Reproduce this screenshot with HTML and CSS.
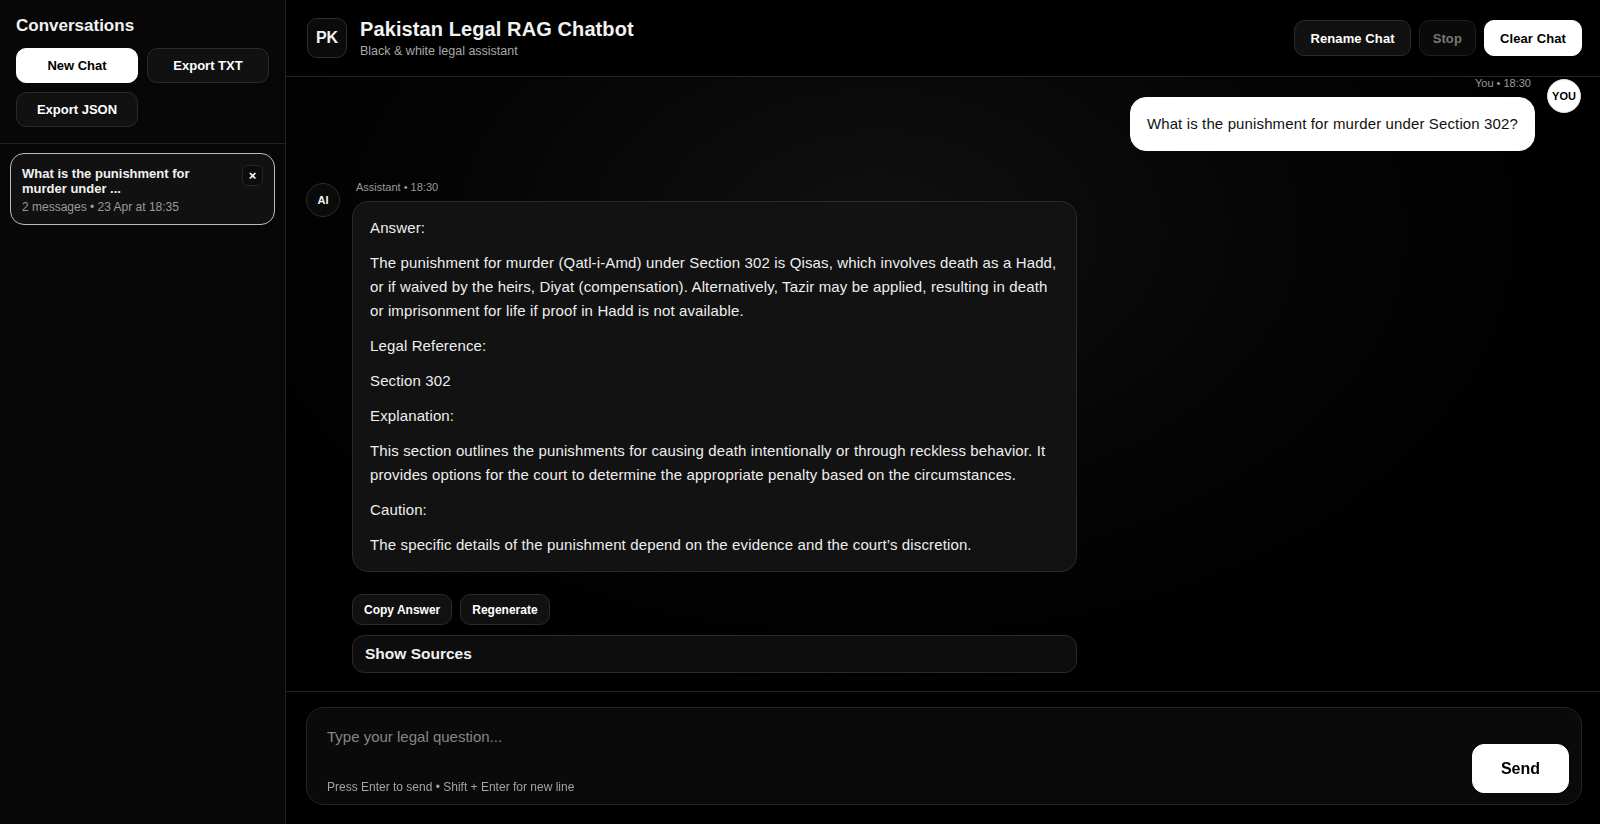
FILE: index.html
```html
<!DOCTYPE html>
<html lang="en">

<head>
    <meta charset="UTF-8">
    <meta name="viewport" content="width=device-width, initial-scale=1.0">
    <title>Pakistan Legal RAG Chatbot</title>
    <link rel="stylesheet" href="styles.css">
</head>

<body>
    <aside class="sidebar">
        <div class="sidebar-top">
            <h2>Conversations</h2>
            <div class="sidebar-actions">
                <button class="btn btn-light">New Chat</button>
                <button class="btn">Export TXT</button>
                <button class="btn">Export JSON</button>
            </div>
        </div>

        <div class="conv-list">
            <div class="conv-item active">
                <div class="conv-text">
                    <div class="conv-title">What is the punishment for murder under ...</div>
                    <div class="conv-meta">2 messages • 23 Apr at 18:35</div>
                </div>
                <button class="conv-close">×</button>
            </div>
        </div>
    </aside>

    <main class="main">
        <header class="topbar">
            <div class="brand">
                <div class="brand-logo">PK</div>
                <div>
                    <h1>Pakistan Legal RAG Chatbot</h1>
                    <p class="brand-sub">Black &amp; white legal assistant</p>
                </div>
            </div>
            <div class="topbar-actions">
                <button class="btn btn-head">Rename Chat</button>
                <button class="btn btn-head btn-stop" disabled>Stop</button>
                <button class="btn btn-head btn-light">Clear Chat</button>
            </div>
        </header>

        <section class="chat">
            <div class="msg user">
                <div class="msg-body">
                    <div class="msg-meta">You • 18:30</div>
                    <div class="bubble">What is the punishment for murder under Section 302?</div>
                </div>
                <div class="avatar">YOU</div>
            </div>

            <div class="msg assistant">
                <div class="avatar">AI</div>
                <div class="msg-body">
                    <div class="msg-meta">Assistant • 18:30</div>
                    <div class="bubble">
                        <p>Answer:</p>
                        <p>The punishment for murder (Qatl-i-Amd) under Section 302 is Qisas, which involves death as a Hadd, or if waived by the heirs, Diyat (compensation). Alternatively, Tazir may be applied, resulting in death or imprisonment for life if proof in Hadd is not available.</p>
                        <p>Legal Reference:</p>
                        <p>Section 302</p>
                        <p>Explanation:</p>
                        <p>This section outlines the punishments for causing death intentionally or through reckless behavior. It provides options for the court to determine the appropriate penalty based on the circumstances.</p>
                        <p>Caution:</p>
                        <p>The specific details of the punishment depend on the evidence and the court’s discretion.</p>
                    </div>
                    <div class="msg-actions">
                        <button class="btn btn-small">Copy Answer</button>
                        <button class="btn btn-small">Regenerate</button>
                    </div>
                    <details class="sources">
                        <summary>Show Sources</summary>
                    </details>
                </div>
            </div>
        </section>

        <footer class="composer-wrap">
            <div class="composer">
                <div class="composer-input">
                    <textarea placeholder="Type your legal question..." autofocus></textarea>
                    <div class="composer-hint">Press Enter to send • Shift + Enter for new line</div>
                </div>
                <button class="btn btn-send">Send</button>
            </div>
        </footer>
    </main>
</body>

</html>
```

FILE: styles.css
```css
* {
    margin: 0;
    padding: 0;
    box-sizing: border-box;
    font-family: 'Liberation Sans', Arial, sans-serif;
}

body {
    display: flex;
    height: 100vh;
    overflow: hidden;
    background-color: #000;
    color: #f2f2f2;
}

.btn {
    height: 36px;
    padding: 0 14px;
    border: 1px solid #2a2a2a;
    border-radius: 10px;
    background-color: #111;
    color: #fff;
    font-size: 13px;
    font-weight: 700;
    cursor: pointer;
}

.btn-light {
    background-color: #fff;
    border-color: #fff;
    color: #000;
}

.btn:disabled {
    color: #777;
    background-color: #0a0a0a;
    border-color: #1e1e1e;
    cursor: default;
}

/* sidebar */
.sidebar {
    width: 286px;
    flex: none;
    background-color: #070707;
    border-right: 1px solid #222;
    display: flex;
    flex-direction: column;
}

.sidebar-top {
    padding: 15px 16px 16px;
    border-bottom: 1px solid #222;
}

.sidebar-top h2 {
    font-size: 17px;
    line-height: 21px;
    margin-bottom: 12px;
}

.sidebar-actions {
    display: grid;
    grid-template-columns: 1fr 1fr;
    gap: 9px 9px;
}

.sidebar-actions .btn {
    height: 35px;
}

.conv-list {
    padding: 9px 10px 10px;
}

.conv-item {
    display: flex;
    justify-content: space-between;
    gap: 8px;
    padding: 12px 11px 10px 11px;
    border: 1px solid #bdbdbd;
    border-radius: 14px;
    background-color: #111;
}

.conv-title {
    font-size: 13px;
    line-height: 15px;
    font-weight: 700;
}

.conv-meta {
    margin-top: 4px;
    font-size: 12px;
    line-height: 14px;
    color: #9a9a9a;
}

.conv-close {
    flex: none;
    width: 21px;
    height: 21px;
    margin-top: -1px;
    border: 1px solid #262626;
    border-radius: 6px;
    background-color: #0c0c0c;
    color: #fff;
    font-size: 13px;
    font-weight: 700;
    cursor: pointer;
}

/* main */
.main {
    flex: 1;
    display: flex;
    flex-direction: column;
    min-width: 0;
}

.topbar {
    height: 77px;
    flex: none;
    display: flex;
    align-items: center;
    justify-content: space-between;
    padding: 0 18px 0 21px;
    border-bottom: 1px solid #242424;
    background-color: #000;
}

.brand {
    display: flex;
    align-items: center;
    gap: 13px;
}

.brand-logo {
    width: 40px;
    height: 40px;
    display: flex;
    align-items: center;
    justify-content: center;
    border: 1px solid #2e2e2e;
    border-radius: 10px;
    background-color: #0b0b0b;
    font-size: 16px;
    font-weight: 700;
}

.brand h1 {
    font-size: 20px;
    line-height: 24px;
    letter-spacing: 0.1px;
}

.brand-sub {
    margin-top: 3px;
    font-size: 12.5px;
    line-height: 15px;
    color: #a8a8a8;
}

.topbar-actions {
    display: flex;
    gap: 8px;
}

.btn-head {
    padding: 0 15px;
    letter-spacing: 0.1px;
}

.btn-head.btn-stop {
    padding: 0 13px;
}

/* chat */
.chat {
    flex: 1;
    overflow-y: auto;
    padding: 0 19px 18px 20px;
    background-image: radial-gradient(ellipse at 45% 25%, #101010 0%, #050505 40%, #000 70%);
}

.msg {
    display: flex;
    gap: 12px;
    align-items: flex-start;
}

.msg.user {
    justify-content: flex-end;
    margin-bottom: 30px;
}

.avatar {
    flex: none;
    width: 34px;
    height: 34px;
    margin-top: 2px;
    border-radius: 50%;
    display: flex;
    align-items: center;
    justify-content: center;
    font-size: 11px;
    font-weight: 700;
    border: 1px solid #2c2c2c;
    background-color: #0a0a0a;
}

.user .avatar {
    background-color: #fff;
    border-color: #ddd;
    color: #000;
}

.msg-meta {
    font-size: 11px;
    line-height: 13px;
    color: #9a9a9a;
    margin-bottom: 7px;
}

.user .msg-meta {
    text-align: right;
    margin-right: 4px;
}

.assistant .msg-meta {
    margin-left: 4px;
}

.bubble {
    font-size: 15px;
    line-height: 24px;
    letter-spacing: 0.13px;
    border: 1px solid #2a2a2a;
    border-radius: 16px;
    background-color: #121212;
    color: #eee;
    padding: 14px 17px;
}

.user .bubble {
    background-color: #fff;
    border-color: #fff;
    color: #111;
    padding: 14px 16px;
}

.bubble p {
    margin-bottom: 11px;
}

.bubble p:last-child {
    margin-bottom: 0;
}

.assistant .msg-body {
    width: 725px;
}

.msg-actions {
    display: flex;
    gap: 8px;
    margin-top: 22px;
}

.btn-small {
    height: 31px;
    padding: 0 11px;
    font-size: 12px;
}

.sources {
    margin-top: 10px;
    border: 1px solid #2a2a2a;
    border-radius: 12px;
    background-color: #0d0d0d;
}

.sources summary {
    list-style: none;
    height: 36px;
    line-height: 36px;
    padding: 0 12px;
    font-size: 15.5px;
    font-weight: 700;
    cursor: pointer;
}

.sources summary::-webkit-details-marker {
    display: none;
}

/* composer */
.composer-wrap {
    flex: none;
    padding: 15px 18px 19px 20px;
    border-top: 1px solid #242424;
    background-color: #000;
}

.composer {
    display: flex;
    align-items: flex-end;
    gap: 12px;
    padding: 18px 12px 10px 20px;
    border: 1px solid #262626;
    border-radius: 18px;
    background-color: #0a0a0a;
}

.composer-input {
    flex: 1;
}

.composer textarea {
    display: block;
    width: 100%;
    height: 44px;
    margin-bottom: 10px;
    resize: none;
    border: none;
    outline: none;
    background: transparent;
    color: #eee;
    caret-color: #fff;
    font-size: 15px;
    line-height: 22px;
}

.composer textarea::placeholder {
    color: #858585;
}

.composer-hint {
    font-size: 12px;
    line-height: 14px;
    color: #a3a3a3;
}

.btn-send {
    width: 97px;
    height: 49px;
    margin-bottom: 1px;
    border-radius: 12px;
    background-color: #fff;
    border-color: #fff;
    color: #000;
    font-size: 16px;
}
```
